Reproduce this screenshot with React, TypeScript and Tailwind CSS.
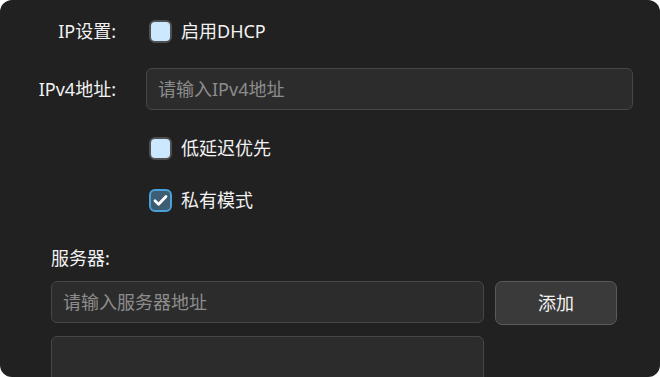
import React from "react";

const font = { fontFamily: '"Noto Sans", "Noto Sans CJK SC", sans-serif' };

function Check({ checked }: { checked?: boolean }) {
  if (checked) {
    return (
      <div className="w-[23px] h-[23px] rounded-[6px] border-2 border-[#4aa0d8] bg-[#3d5d72] flex items-center justify-center">
        <svg width="15" height="13" viewBox="0 0 15 13">
          <path d="M2 6.8 L5.6 10.2 L13 2.6" fill="none" stroke="#ffffff" strokeWidth="2.8" strokeLinecap="round" strokeLinejoin="round" />
        </svg>
      </div>
    );
  }
  return <div className="w-[23px] h-[23px] rounded-[6px] border-2 border-[#505050] bg-[#cce8ff]" />;
}

export default function App() {
  return (
    <div className="w-[660px] h-[377px] bg-white" style={font}>
      <div className="w-full h-full bg-[#212121] rounded-[12px] overflow-hidden text-[18px] text-[#f2f2f2] relative">
        <div className="flex items-center h-[62px]">
          <div className="w-[116px] text-right leading-[23px]">IP设置:</div>
          <div className="ml-[33px] flex items-center gap-[9px]">
            <Check />
            <span className="leading-[23px]">启用DHCP</span>
          </div>
        </div>
        <div className="flex items-center mt-[6px]">
          <div className="w-[116px] text-right leading-[23px]">IPv4地址:</div>
          <div className="ml-[30px] w-[487px] h-[42px] rounded-[6px] border border-[#464646] bg-[#2c2c2c] flex items-center px-[11px] text-[#8c8c8c] leading-[23px]">
            请输入IPv4地址
          </div>
        </div>
        <div className="flex items-center gap-[9px] ml-[149px] mt-[27px]">
          <Check />
          <span className="leading-[23px]">低延迟优先</span>
        </div>
        <div className="flex items-center gap-[9px] ml-[149px] mt-[29px]">
          <Check checked />
          <span className="leading-[23px]">私有模式</span>
        </div>
        <div className="ml-[51px] mt-[36px] leading-[20px]">服务器:</div>
        <div className="flex ml-[51px] mt-[13px] gap-[11px] items-start">
          <div className="w-[433px] h-[42px] rounded-[6px] border border-[#464646] bg-[#2c2c2c] flex items-center px-[11px] text-[#8c8c8c] leading-[23px]">
            请输入服务器地址
          </div>
          <div className="w-[122px] h-[44px] rounded-[7px] border border-[#5a5a5a] bg-[#3a3a3a] flex items-center justify-center leading-[23px]">
            添加
          </div>
        </div>
        <div className="ml-[51px] mt-[11px] w-[433px] h-[60px] rounded-[6px] border border-[#464646] bg-[#2c2c2c]" />
      </div>
    </div>
  );
}
